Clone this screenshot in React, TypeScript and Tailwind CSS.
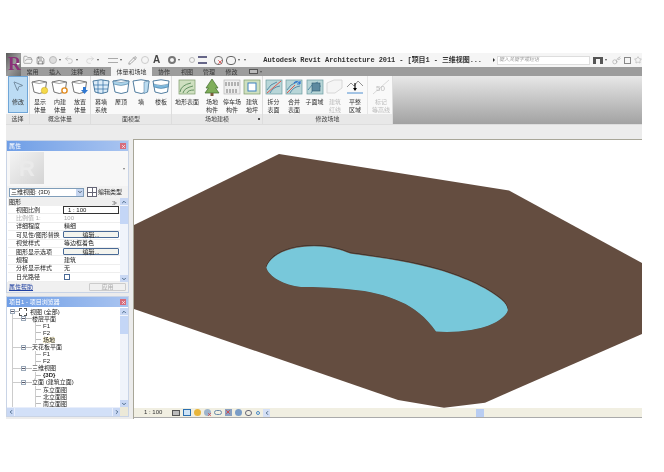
import {
  ChevronDown,
  ChevronLeft,
  ChevronRight,
  ChevronUp,
  FolderOpen,
  Key,
  MousePointer2,
  Pencil,
  Redo2,
  Save,
  Star,
  Undo2,
  X,
} from "lucide-react";

const FONT = "font-['Liberation_Sans','Noto_Sans_CJK_SC',sans-serif]";

const tabs = [
  { label: "常用", w: "w-[23px]" },
  { label: "插入", w: "w-[22px]" },
  { label: "注释", w: "w-[22px]" },
  { label: "结构", w: "w-[23px]" },
  { label: "体量和场地", w: "w-[41px]", active: true },
  { label: "协作", w: "w-[24px]" },
  { label: "视图", w: "w-[22px]" },
  { label: "管理", w: "w-[22px]" },
  { label: "修改", w: "w-[23px]" },
];

const Arrow = () => (
  <span className="mx-[2px] h-0 w-0 border-x-[1.5px] border-t-[2px] border-x-transparent border-t-[#555]" />
);

const Mass = ({ kind }: { kind: string }) => (
  <svg width="18" height="16" viewBox="0 0 18 16" fill="none">
    <path d="M1 3Q8 0 15.500 3L14 13Q8 16 3 13Z" fill="#fff" stroke="#666" strokeWidth="0.9" />
    <path d="M1 3Q8 6 15.500 3" stroke="#777" strokeWidth="0.7" />
    {kind === "show" && <circle cx="13.500" cy="11.500" r="3.200" fill="#f4d94a" stroke="#c9a21e" strokeWidth="0.5" />}
    {kind === "build" && <circle cx="13.500" cy="11.500" r="2.600" fill="#fff" stroke="#e08a1e" strokeWidth="1.400" />}
    {kind === "place" && <path d="M12 8h3v3h2l-3.500 4L10 11h2z" fill="#2f77d0" />}
  </svg>
);

const Face = ({ kind }: { kind: string }) => (
  <svg width="18" height="16" viewBox="0 0 18 16" fill="none">
    <path d="M1 2Q9 -0.500 17 2L15.500 13Q9 16 3 13Z" fill={kind === "curtain" ? "#dcecf8" : "#fff"} stroke="#3e6f95" strokeWidth="0.9" />
    {kind === "curtain" && <path d="M6 1.500V14.500M11 1V14.500M1.300 6H16.500M2 10H16" stroke="#2f6ea3" strokeWidth="0.7" />}
    {kind === "roof" && <path d="M1 2Q9 5 17 2L16 5Q9 8 1.500 5Z" fill="#a9d3ea" stroke="#3e6f95" strokeWidth="0.5" />}
    {kind === "wall" && <path d="M12 3L17 2L15.500 13L12 14.500Z" fill="#bcdcf0" stroke="#3e6f95" strokeWidth="0.5" />}
    {kind === "floor" && <path d="M1.400 5Q9 8 16.600 5L16.200 8Q9 11 2 8Z" fill="#7db9de" stroke="#3e6f95" strokeWidth="0.5" />}
  </svg>
);

const Site = ({ kind }: { kind: string }) => {
  if (kind === "tree")
    return (
      <svg width="18" height="17" viewBox="0 0 18 17">
        <path d="M9 0L15 9H12.500L16 14H2L5.500 9H3Z" fill="#7fae5a" stroke="#3f6a2c" strokeWidth="0.7" />
        <rect x="7.500" y="14" width="3" height="3" fill="#7b5a3a" />
      </svg>
    );
  if (kind === "parking")
    return (
      <svg width="18" height="16" viewBox="0 0 18 16" fill="none">
        <rect x="1" y="1" width="16" height="14" fill="#eee" stroke="#aaa" strokeWidth="0.6" />
        <path d="M3 3v4M6 3v4M9 3v4M12 3v4M15 3v4M4 10v4M7 10v4M10 10v4M13 10v4" stroke="#555" strokeWidth="0.8" />
      </svg>
    );
  return (
    <svg width="18" height="16" viewBox="0 0 18 16" fill="none">
      <rect x="1" y="1" width="16" height="14" fill="#cfe0c0" stroke="#7c9a6a" strokeWidth="0.7" />
      {kind === "topo" && <path d="M2 13Q3 6 13 4M5 14Q6 9 15 7M9 14Q10 11 16 11" stroke="#5a8a5a" strokeWidth="0.9" />}
      {kind === "pad" && <rect x="5" y="4" width="8" height="8" fill="#fff" stroke="#3c80c0" strokeWidth="1" />}
    </svg>
  );
};

const Split = ({ kind }: { kind: string }) => {
  if (kind === "line")
    return (
      <svg width="18" height="16" viewBox="0 0 18 16" fill="none" opacity="0.35">
        <path d="M1 14V4L8 1H16V9L9 14Z" fill="#eee" stroke="#999" />
      </svg>
    );
  if (kind === "grade")
    return (
      <svg width="18" height="16" viewBox="0 0 18 16" fill="none">
        <path d="M1 8L5 4L8 7L12 2L17 7" stroke="#777" strokeWidth="0.8" />
        <path d="M9 4V11" stroke="#000" strokeWidth="1.100" />
        <path d="M7 9L9 12L11 9Z" fill="#000" />
        <path d="M1 14H17" stroke="#4e8fd0" strokeWidth="1" />
      </svg>
    );
  return (
    <svg width="18" height="16" viewBox="0 0 18 16" fill="none">
      <rect x="1" y="1" width="16" height="14" fill="#b8d6d8" stroke="#6b9aa0" strokeWidth="0.7" />
      <path d="M2 11Q5 5 12 3M5 14Q8 8 15 7" stroke="#4c82a0" strokeWidth="0.9" />
      {kind === "split" && <path d="M2 14L16 2" stroke="#e0584f" strokeWidth="1" />}
      {kind === "merge" && <path d="M2 14L10 6" stroke="#e0584f" strokeWidth="1" />}
      {kind === "merge" && <path d="M9 4Q13 1 15 5M15 5V2M15 5H12" stroke="#2f77d0" strokeWidth="1.200" />}
      {kind === "sub" && <rect x="6" y="4" width="8" height="8" fill="#5d8aa0" stroke="#2f5a70" strokeWidth="0.6" />}
    </svg>
  );
};

const Tool = ({
  icon,
  lines,
  w = "w-[20px]",
  dim,
}: {
  icon: React.ReactNode;
  lines: string[];
  w?: string;
  dim?: boolean;
}) => (
  <div className={`flex ${w} shrink-0 flex-col items-center pt-[2px]`}>
    <div className="flex h-[18px] items-center justify-center">{icon}</div>
    <div className={`mt-[2px] text-center text-[6px] leading-[8px] ${dim ? "text-[#bbb]" : "text-[#333]"}`}>
      {lines.map((l) => (
        <div key={l} className="whitespace-nowrap">
          {l}
        </div>
      ))}
    </div>
  </div>
);

const Group = ({ label, w, children, corner }: { label: string; w: string; children: React.ReactNode; corner?: boolean }) => (
  <div className={`flex ${w} shrink-0 flex-col border-r border-[#ddd]`}>
    <div className="flex h-[38px] bg-[#f9f9f9]">{children}</div>
    <div className="relative flex h-[10px] items-center justify-center bg-[#e8e8e8] text-[6px] text-[#444]">
      {label}
      {corner && <span className="absolute right-[2px] top-[4px] size-[2px] bg-[#555]" />}
    </div>
  </div>
);

const Ribbon = () => (
  <div className="flex h-[48px]">
    <Group label="选择" w="w-[24px]">
      <div className="ml-[2px] flex h-[37px] w-[20px] flex-col items-center border border-[#6fa6d8] bg-[#bcdcf4] pt-[3px]">
        <MousePointer2 size={12} strokeWidth={1} className="text-[#345]" />
        <span className="mt-[6px] text-[6px] leading-[8px] text-[#333]">修改</span>
      </div>
    </Group>
    <Group label="概念体量" w="w-[61px]">
      <Tool icon={<Mass kind="show" />} lines={["显示", "体量"]} />
      <Tool icon={<Mass kind="build" />} lines={["内建", "体量"]} />
      <Tool icon={<Mass kind="place" />} lines={["放置", "体量"]} />
    </Group>
    <Group label="面模型" w="w-[81px]">
      <Tool icon={<Face kind="curtain" />} lines={["幕墙", "系统"]} />
      <Tool icon={<Face kind="roof" />} lines={["屋顶"]} />
      <Tool icon={<Face kind="wall" />} lines={["墙"]} />
      <Tool icon={<Face kind="floor" />} lines={["楼板"]} />
    </Group>
    <Group label="场地建模" w="w-[91px]" corner>
      <Tool icon={<Site kind="topo" />} lines={["地形表面"]} w="w-[30px]" />
      <Tool icon={<Site kind="tree" />} lines={["场地", "构件"]} />
      <Tool icon={<Site kind="parking" />} lines={["停车场", "构件"]} />
      <Tool icon={<Site kind="pad" />} lines={["建筑", "地坪"]} />
    </Group>
    <Group label="修改场地" w="w-[130px]">
      <Tool icon={<Split kind="split" />} lines={["拆分", "表面"]} w="w-[21px]" />
      <Tool icon={<Split kind="merge" />} lines={["合并", "表面"]} />
      <Tool icon={<Split kind="sub" />} lines={["子面域"]} w="w-[21px]" />
      <Tool icon={<Split kind="line" />} lines={["建筑", "红线"]} dim />
      <Tool icon={<Split kind="grade" />} lines={["平整", "区域"]} />
      <div className="ml-[2px] border-l border-[#e6e6e6]">
        <Tool
          icon={
            <svg width="18" height="16" viewBox="0 0 18 16" fill="none">
              <path d="M1 15L17 1" stroke="#ccc" strokeWidth="0.7" />
              <text x="4" y="12" fontSize="8" fill="#bbb">50</text>
            </svg>
          }
          lines={["标记", "等高线"]}
          w="w-[26px]"
          dim
        />
      </div>
    </Group>
    <div className="flex-1 bg-linear-to-b from-[#e8e8e8] to-[#a2a2a2]" />
  </div>
);

const TitleBar = () => (
  <div className="flex h-[14px] items-center bg-[#f5f5f5] pl-[2px]">
    <FolderOpen size={10} strokeWidth={1.2} className="text-[#666]" />
    <Save size={9} strokeWidth={1.6} className="ml-[3px] text-[#555]" />
    <span className="ml-[4px] size-[8px] rounded-sm border border-[#bbb] bg-[#ddd]" />
    <Arrow />
    <Undo2 size={10} strokeWidth={1.1} className="ml-[1px] text-[#999]" />
    <Arrow />
    <Redo2 size={10} strokeWidth={1.1} className="ml-[5px] text-[#bbb]" />
    <Arrow />
    <span className="ml-[7px] h-[5px] w-[10px] border-y border-[#aaa]" />
    <Arrow />
    <Pencil size={9} strokeWidth={1.3} className="ml-[4px] text-[#555]" />
    <span className="ml-[4px] size-[8px] rounded-full border border-[#ccc]" />
    <span className="ml-[4px] text-[10px] font-bold leading-none text-[#444]">A</span>
    <span className="ml-[8px] size-[8px] rounded-full border-2 border-[#777]" />
    <Arrow />
    <span className="ml-[7px] size-[6px] rounded-full border border-[#bbb]" />
    <span className="ml-[3px] h-[8px] w-[9px] border-y-2 border-[#668]" />
    <span className="relative ml-[7px] h-[9px] w-[9px] rounded-sm border border-[#777]">
      <X size={6} strokeWidth={3} className="absolute -bottom-[1px] -right-[1px] text-[#d33]" />
    </span>
    <span className="ml-[3px] h-[9px] w-[10px] rounded-sm border-[1.5px] border-[#666]" />
    <Arrow />
    <Arrow />
    <span className="ml-[15px] whitespace-nowrap font-['Liberation_Mono','Noto_Sans_CJK_SC',monospace] text-[7px] font-bold tracking-[-0.08px] text-[#333]">
      Autodesk Revit Architecture 2011 - [项目1 - 三维视图...
    </span>
    <span className="ml-[11px] h-0 w-0 border-y-[2px] border-l-[2px] border-y-transparent border-l-[#333]" />
    <div className="ml-[2px] flex h-[9px] w-[93px] items-center border border-[#ddd] bg-white pl-[1px] text-[5px] italic text-[#999]">
      键入关键字或短语
    </div>
    <span className="ml-[3px] h-[7px] w-[10px] border-x-[3px] border-t-2 border-[#555]" />
    <Arrow />
    <Key size={9} strokeWidth={1} className="ml-[3px] text-[#777]" />
    <span className="ml-[3px] size-[7px] border border-[#888]" />
    <Star size={8} strokeWidth={1} className="ml-[3px] text-[#777]" />
  </div>
);

const TabBar = () => (
  <div className="flex h-[9px] items-center bg-[#9c9c9c] text-[6px] leading-none text-[#333]">
    {tabs.map((t) => (
      <div
        key={t.label}
        className={`flex h-[9px] ${t.w} shrink-0 items-center justify-center ${t.active ? "bg-[#f4f4f4]" : ""}`}
      >
        {t.label}
      </div>
    ))}
    <span className="ml-[6px] h-[5px] w-[9px] border border-[#555] bg-[#bbb]" />
    <Arrow />
  </div>
);

const PanelTitle = ({ title }: { title: string }) => (
  <div className="flex h-[10px] items-center justify-between bg-linear-to-r from-[#6f9ee6] to-[#a9c4f0] px-[2px] text-[6px] leading-none text-white">
    <span>{title}</span>
    <span className="flex size-[6px] items-center justify-center bg-[#d66c7c]">
      <X size={5} strokeWidth={3} className="text-white" />
    </span>
  </div>
);

const rows: { name: string; value?: string; kind?: string; dim?: boolean }[] = [
  { name: "视图比例", value: "1 : 100", kind: "input" },
  { name: "比例值 1:", value: "100", dim: true },
  { name: "详细程度", value: "精细" },
  { name: "可见性/图形替换", value: "编辑...", kind: "button" },
  { name: "视觉样式", value: "等边框着色" },
  { name: "图形显示选项", value: "编辑...", kind: "button" },
  { name: "规程", value: "建筑" },
  { name: "分析显示样式", value: "无" },
  { name: "日光路径", kind: "check" },
];

const Properties = () => (
  <div className="flex h-[153px] flex-col border border-[#c9d4e6] bg-[#ece9d8]">
    <PanelTitle title="属性" />
    <div className="relative flex h-[35px] items-start bg-[#f7f7f7] px-[3px] pt-[1px]">
      <div className="flex h-[32px] w-[34px] items-center justify-center bg-linear-to-br from-[#f4f4f4] to-[#d4d4d4] text-[22px] font-bold text-[#eaeaea]">
        R
      </div>
      <span className="absolute right-[3px] top-[17px] h-0 w-0 border-x-[1.5px] border-t-[2px] border-x-transparent border-t-[#777]" />
    </div>
    <div className="flex h-[12px] items-center bg-[#f2f2f2] pl-[2px] text-[6px] text-[#222]">
      <div className="flex h-[9px] w-[75px] items-center justify-between border border-[#7f9db9] bg-white pl-[1px]">
        <span>三维视图: {"{3D}"}</span>
        <span className="flex h-[7px] w-[7px] items-center justify-center bg-[#c5d5f0]">
          <ChevronDown size={6} strokeWidth={3} className="text-[#345]" />
        </span>
      </div>
      <span className="ml-[3px] grid size-[10px] grid-cols-2 gap-px border border-[#667] bg-[#667]">
        <span className="bg-white" />
        <span className="bg-white" />
        <span className="bg-white" />
        <span className="bg-white" />
      </span>
      <span className="ml-[1px] whitespace-nowrap">编辑类型</span>
    </div>
    <div className="flex h-[84px] bg-white pl-[1px]">
      <div className="flex-1 text-[6px] leading-none text-[#222]">
        <div className="flex h-[8px] items-center justify-between bg-[#efefef] pl-[1px] pr-[3px]">
          <span>图形</span>
          <span className="text-[5px]">≫</span>
        </div>
        {rows.map((r) => (
          <div key={r.name} className="flex h-[8.400px] items-center border-b border-[#eee]">
            <div className={`w-[54px] shrink-0 whitespace-nowrap pl-[8px] ${r.dim ? "text-[#aaa]" : ""}`}>{r.name}</div>
            <div className={`ml-[1px] flex h-full flex-1 items-center pl-[1px] ${r.dim ? "text-[#aaa]" : ""}`}>
              {r.kind === "input" && (
                <div className="-ml-[1px] mr-[1px] flex h-[8px] w-full items-center border border-[#333] pl-[4px]">{r.value}</div>
              )}
              {r.kind === "button" && (
                <div className="-ml-[1px] mr-[1px] flex h-[7px] w-full items-center justify-center rounded-[1px] border border-[#4a6a96] bg-[#f4f4ee]">
                  {r.value}
                </div>
              )}
              {r.kind === "check" && <span className="size-[6px] border border-[#4a6a96]" />}
              {!r.kind && r.value}
            </div>
          </div>
        ))}
      </div>
      <Scroll />
    </div>
    <div className="flex flex-1 items-center justify-between bg-[#f0f0f0] px-[2px] text-[6px]">
      <span className="text-[#2040a0] underline">属性帮助</span>
      <span className="flex h-[8px] w-[37px] items-center justify-center rounded-[1px] border border-[#ccc] text-[#aaa]">应用</span>
    </div>
  </div>
);

const Scroll = () => (
  <div className="flex w-[8px] shrink-0 flex-col bg-[#f0f4fb]">
    <span className="flex h-[7px] items-center justify-center bg-[#c9d8f4]">
      <ChevronUp size={6} strokeWidth={3} className="text-[#246]" />
    </span>
    <span className="mt-[1px] h-[18px] bg-[#c4d6f6]" />
    <span className="flex-1" />
    <span className="flex h-[7px] items-center justify-center bg-[#c9d8f4]">
      <ChevronDown size={6} strokeWidth={3} className="text-[#246]" />
    </span>
  </div>
);

const tree: { label: string; depth: number; bold?: boolean; hl?: boolean }[] = [
  { label: "视图 (全部)", depth: 0 },
  { label: "楼层平面", depth: 1 },
  { label: "F1", depth: 2 },
  { label: "F2", depth: 2 },
  { label: "场地", depth: 2, hl: true },
  { label: "天花板平面", depth: 1 },
  { label: "F1", depth: 2 },
  { label: "F2", depth: 2 },
  { label: "三维视图", depth: 1 },
  { label: "{3D}", depth: 2, bold: true },
  { label: "立面 (建筑立面)", depth: 1 },
  { label: "东立面图", depth: 2 },
  { label: "北立面图", depth: 2 },
  { label: "南立面图", depth: 2 },
];

const Expander = () => (
  <span className="relative size-[5px] shrink-0 border border-[#9aa8b8] bg-white">
    <span className="absolute left-0 top-[1px] h-px w-[3px] bg-[#556]" />
  </span>
);

const Browser = () => (
  <div className="flex h-[121px] flex-col border border-[#c9d4e6] bg-white">
    <PanelTitle title="项目1 - 项目浏览器" />
    <div className="flex h-[100px] bg-white pt-[1px]">
      <div className="relative flex-1 overflow-hidden text-[6px] leading-none text-[#222]">
        <span className="absolute bottom-0 left-[5px] top-[5px] w-px bg-[#ccc]" />
        {tree.map((n, i) => (
          <div key={i} className="relative flex h-[7.100px] items-center">
            {n.depth === 0 && (
              <div className="flex items-center pl-[3px]">
                <Expander />
                <span className="h-px w-[4px] bg-[#bbb]" />
                <span className="size-[8px] border border-dashed border-[#555]" />
                <span className="ml-[3px] whitespace-nowrap">{n.label}</span>
              </div>
            )}
            {n.depth === 1 && (
              <div className="flex items-center">
                <span className="ml-[5px] h-px w-[9px] bg-[#ccc]" />
                <Expander />
                <span className="h-px w-[6px] bg-[#bbb]" />
                <span className="whitespace-nowrap">{n.label}</span>
              </div>
            )}
            {n.depth === 2 && (
              <div className="flex items-center pl-[28px]">
                <span className="absolute inset-y-0 left-[28px] w-px bg-[#ccc]" />
                <span className="h-px w-[6px] bg-[#bbb]" />
                <span className={`ml-[2px] whitespace-nowrap ${n.bold ? "font-bold" : ""} ${n.hl ? "bg-[#fdf6d8]" : ""}`}>
                  {n.label}
                </span>
              </div>
            )}
          </div>
        ))}
      </div>
      <Scroll />
    </div>
    <div className="flex h-[9px] items-center bg-[#e8eefb]">
      <span className="flex h-[8px] w-[7px] items-center justify-center bg-[#c9d8f4]">
        <ChevronLeft size={6} strokeWidth={3} className="text-[#246]" />
      </span>
      <span className="mx-[1px] h-[8px] flex-1 bg-[#d2e0f8]" />
      <span className="flex h-[8px] w-[7px] items-center justify-center bg-[#c9d8f4]">
        <ChevronRight size={6} strokeWidth={3} className="text-[#246]" />
      </span>
      <span className="h-full w-[8px] bg-[#ece9d8]" />
    </div>
  </div>
);

const POND =
  "M265 267C270 252 290 245 313 245C330 245 340 249 350 252.500C385 257 415 262 437 268.500C465 277 490 288 503 301C506 304 507 308 507 310C505 318 490 327 470 330C458 332 445 332.500 435 331.500C425 317 412 307 400 302C385 295 368 291 350 289.500C330 287.500 315 287 300 287C283 285 268 277 265 267Z";

const Canvas = () => (
  <div className="flex flex-1 flex-col border-l border-t border-[#a8a698] bg-white">
    <svg className="h-[268px] w-full" viewBox="133 140 508 268">
      <defs>
        <clipPath id="pond">
          <path d={POND} />
        </clipPath>
      </defs>
      <path
        d="M133 225L278 154L508 190.500L641 263V334L484 402.700L443 407.800L397 400L133 309Z"
        fill="#644d40"
      />
      <path d={POND} fill="#2e2723" />
      <g clipPath="url(#pond)">
        <path d={POND} fill="#6a5245" transform="translate(0 0.500)" />
        <path d={POND} fill="#78c8da" transform="translate(0 1.300)" />
      </g>
    </svg>
    <div className="flex h-[10px] items-center border-b border-[#aaa] bg-[#f1efe2] text-[6px] text-[#333]">
      <span className="ml-[10px] w-[28px] whitespace-nowrap">1 : 100</span>
      <StatusIcons />
      <span className="ml-[2px] flex h-[8px] w-[7px] items-center justify-center bg-[#d5e0f6]">
        <ChevronLeft size={6} strokeWidth={3} className="text-[#246]" />
      </span>
      <span className="ml-[206px] h-[8px] w-[8px] bg-[#b9cdf2]" />
    </div>
  </div>
);

const StatusIcons = () => (
  <div className="flex items-center gap-[3px]">
    <span className="h-[6px] w-[8px] border border-[#555] bg-[#bbb]" />
    <span className="h-[7px] w-[8px] border border-[#2b6fb0] bg-[#cfe4f6]" />
    <span className="size-[7px] rounded-full bg-[#e8b53a]" />
    <span className="relative size-[7px] rounded-full bg-[#9db4cc]">
      <X size={5} strokeWidth={3} className="absolute -bottom-px -right-px text-[#d33]" />
    </span>
    <span className="h-[5px] w-[8px] rounded-full border border-[#6a8aa8]" />
    <span className="relative size-[7px] bg-[#8aa0c0]">
      <X size={6} strokeWidth={3} className="absolute inset-0 text-[#d33]" />
    </span>
    <span className="size-[7px] rounded-sm bg-[#7a9cc6]" />
    <span className="h-[6px] w-[7px] rounded-full border border-[#667]" />
    <span className="mx-[1px] size-[4px] rounded-full border border-[#4a8ac8]" />
  </div>
);

export default function App() {
  return (
    <div className={`h-[472px] w-[664px] overflow-hidden bg-white pl-[6px] pt-[53px] ${FONT} blur-[0.3px]`}>
      <div className="flex w-[636px] flex-col">
        <div className="flex">
          <div className="relative flex h-[23px] w-[23px] items-start overflow-hidden bg-linear-to-br from-[#5a5a5a] via-[#9a9a9a] to-[#6c6c6c] pl-[2px] pt-[2px]">
            <span className="font-['Liberation_Serif'] text-[18px] font-bold leading-none text-[#8a3078]">R</span>
            <span className="absolute right-[1px] top-[10px] h-0 w-0 border-x-[2px] border-t-[2px] border-x-transparent border-t-white" />
          </div>
          <div className="flex-1">
            <TitleBar />
            <TabBar />
          </div>
        </div>
        <Ribbon />
        <div className="h-[15px] border-t border-[#ddd] bg-[#ececec]" />
        <div className="flex h-[280px] bg-[#ececec]">
          <div className="flex w-[127px] flex-col gap-[3px] pr-[4px] pt-px">
            <Properties />
            <Browser />
          </div>
          <Canvas />
        </div>
      </div>
    </div>
  );
}
